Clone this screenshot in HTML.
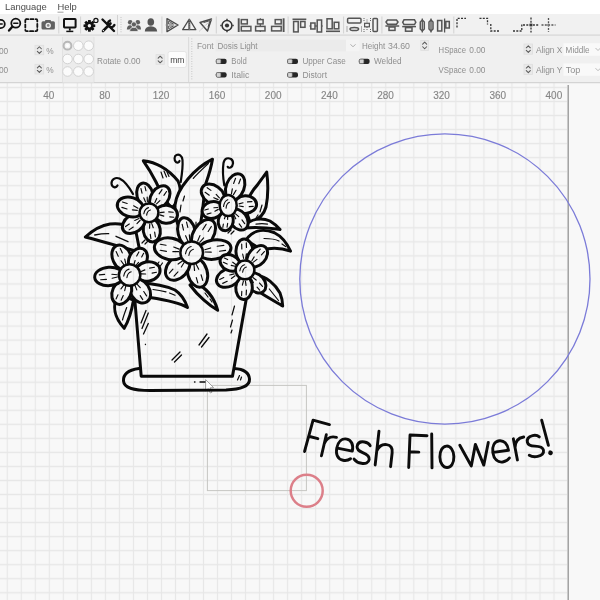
<!DOCTYPE html>
<html><head><meta charset="utf-8">
<style>
html,body{margin:0;padding:0;width:600px;height:600px;overflow:hidden;background:#f6f6f6}
svg{display:block;filter:blur(0.35px)}
text{font-family:"Liberation Sans",sans-serif}
</style></head><body>
<svg width="600" height="600" viewBox="0 0 600 600">
<defs>
<pattern id="grid" x="0.23" y="94.48" width="14.02" height="14.036" patternUnits="userSpaceOnUse">
<path d="M0 7.018H14.02M7.01 0V14.036" stroke="#e7e7e7" stroke-width="1.2" fill="none"/>
</pattern>
</defs>
<!-- canvas -->
<rect x="0" y="83" width="600" height="517" fill="#f8f8f8"/>
<rect x="0" y="83" width="567" height="517" fill="url(#grid)"/>
<line x1="568.2" y1="85" x2="568.2" y2="600" stroke="#9a9a9a" stroke-width="1.4"/>
<!-- CANVAS OBJ START -->
<circle cx="444.9" cy="279" r="145.1" fill="none" stroke="#7b7bd8" stroke-width="1.3"/>
<rect x="207.4" y="385.4" width="99" height="105.2" fill="none" stroke="#c6c6c2" stroke-width="1"/>
<g fill="none" stroke="#0c0c0c" stroke-width="2.9" stroke-linecap="round" stroke-linejoin="round">
<path transform="translate(304.56 451.48) rotate(15.18)" d="M0 0V-32.5H17M0 -15.8H9.5"/>
<path transform="translate(321.45 455.73) rotate(13.06)" d="M0 0V-21.5M0 -12.5C1.2 -18.5 5 -21.5 10.5 -21.3"/>
<path transform="translate(334.67 458.59) rotate(11.41)" d="M0.6 -10.8H15.8C16 -17.5 12.5 -21.5 8 -21.5C3 -21.5 0 -17 0 -10.75C0 -4 3.5 0 8.5 0C11.5 0 13.8 -1 15.6 -3"/>
<path transform="translate(353.58 462.01) rotate(9.08)" d="M13.8 -18.8C12.3 -20.8 10.5 -21.5 7.5 -21.5C3.5 -21.5 1 -19.5 1 -16C1 -12.5 4 -11.6 7.5 -10.7C12 -9.6 15 -8.2 15 -5C15 -1.6 12 0 8 0C4.5 0 2 -1 0 -3"/>
<path transform="translate(375.18 464.95) rotate(6.42)" d="M0 0V-34M0 -14C1.5 -19 5 -21.5 9 -21.5C13.5 -21.5 15.5 -18.5 15.5 -14V0"/>
<path transform="translate(408.70 467.52) rotate(2.34)" d="M0 0V-32.5H17M0 -15.8H9.5"/>
<path transform="translate(432.00 467.89) rotate(-0.50)" d="M0 0V-34"/>
<path transform="translate(440.15 467.75) rotate(-1.49)" d="M7 -21.5C11 -21.5 14 -17 14 -10.75C14 -4.5 11 0 7 0C3 0 0 -4.5 0 -10.75C0 -17 3 -21.5 7 -21.5Z"/>
<path transform="translate(461.33 466.72) rotate(-4.07)" d="M0 -21.5L10 0L15.6 -21.3L22.5 0L28.6 -22.2"/>
<path transform="translate(494.35 463.20) rotate(-8.11)" d="M0.6 -10.8H15.8C16 -17.5 12.5 -21.5 8 -21.5C3 -21.5 0 -17 0 -10.75C0 -4 3.5 0 8.5 0C11.5 0 13.8 -1 15.6 -3"/>
<path transform="translate(517.42 459.94) rotate(-10.94)" d="M0 0V-21.5M0 -12.5C1.2 -18.5 5 -21.5 10.5 -21.3"/>
<path transform="translate(529.89 458.18) rotate(-12.46)" d="M13.8 -18.8C12.3 -20.8 10.5 -21.5 7.5 -21.5C3.5 -21.5 1 -19.5 1 -16C1 -12.5 4 -11.6 7.5 -10.7C12 -9.6 15 -8.2 15 -5C15 -1.6 12 0 8 0C4.5 0 2 -1 0 -3"/>
<path transform="translate(550.62 453.51) rotate(-15.04)" d="M0 -34.5L0 -8.5M-0.3 -1.6L0.3 -1.4M0 -1.5a0.9 0.9 0 1 0 0.1 0"/>
</g>
<circle cx="306.7" cy="490.8" r="16" fill="none" stroke="#dc7f89" stroke-width="2.5"/>
<!-- cursor -->
<path d="M205.6 379.6L205.6 391L208.3 388.6L210.3 393L212 392.2L210 387.9L213.6 387.6Z" fill="#fff" stroke="#8a8a8a" stroke-width="0.8" stroke-linejoin="round"/>
<!-- CANVAS OBJ END -->
<!-- FLOWERS START -->
<mask id="fm" maskUnits="userSpaceOnUse" x="0" y="0" width="600" height="600">
<rect x="0" y="0" width="600" height="600" fill="#000"/>
<path d="M139 368.5C128 370 123 374 123.5 381C124 388 133 390.3 150 390.5L226 390C241 389.5 250 386 249.5 379C249 372 243 369 234 368.5" fill="#000" stroke="#fff" stroke-width="3.0" stroke-linejoin="round" stroke-linecap="round"/>
<path d="M134.5 296L141.2 376.2L232.5 376.2L247.5 292" fill="#000" stroke="#fff" stroke-width="3.0" stroke-linejoin="round" stroke-linecap="round"/>
<path d="M172 360L180 352M174.5 362L181.5 355" fill="none" stroke="#fff" stroke-width="1.3" stroke-linecap="round"/>
<path d="M199 345L207 334M201.5 347L209 337.5" fill="none" stroke="#fff" stroke-width="1.3" stroke-linecap="round"/>
<path d="M141 323L146 310.5M142 328.5L148.3 313M143.5 334L148.3 323.5" fill="none" stroke="#fff" stroke-width="1.3" stroke-linecap="round"/>
<path d="M232 315L234.5 306M230.5 327L232.5 320M231 333L232 330" fill="none" stroke="#fff" stroke-width="1.2" stroke-linecap="round"/>
<path d="M237.5 380L239.5 375.5M240.5 380L241.5 377" fill="none" stroke="#fff" stroke-width="1.2" stroke-linecap="round"/>
<path d="M194.5 382L195 382M200 382L205 382" fill="none" stroke="#fff" stroke-width="1.3" stroke-linecap="round"/>
<path d="M145.3 344.2L145.5 344.6" fill="none" stroke="#fff" stroke-width="1.2" stroke-linecap="round"/>
<path d="M143.3 160.8C155 162 168 169 178 181C182 190 180 200 172 208C163 200 160 190 156 182C152 174 147 166 143.3 160.8Z" fill="#000" stroke="#fff" stroke-width="3.0" stroke-linejoin="round" stroke-linecap="round"/>
<path d="M161 172L163 178M164 171L166.5 177M167 172L169 176.5" fill="none" stroke="#fff" stroke-width="1.2" stroke-linecap="round"/>
<path d="M212.5 159.2C211 168 208.5 176 206 183C203.5 192 204 215 196 246C182 238 174 222 175 205C177 188 195 168 212.5 159.2Z" fill="#000" stroke="#fff" stroke-width="3.0" stroke-linejoin="round" stroke-linecap="round"/>
<path d="M208.3 163.5C202 169.5 197 174 193.3 178.3" fill="none" stroke="#fff" stroke-width="1.3" stroke-linecap="round"/>
<path d="M181 205L180 212M184.5 196L183 201M199 235L198.5 240M196 222L196 227" fill="none" stroke="#fff" stroke-width="1.2" stroke-linecap="round"/>
<path d="M266.7 172C268 182 268.5 195 266 207C264 214 259 220 250 222C244 210 247 196 257.5 184.9C261 180 264 176 266.7 172Z" fill="#000" stroke="#fff" stroke-width="3.0" stroke-linejoin="round" stroke-linecap="round"/>
<path d="M262 205L260 212M258 215L256 218" fill="none" stroke="#fff" stroke-width="1.2" stroke-linecap="round"/>
<path d="M244 226C251 219 261 217 270 221C275 224 278 227 280 229.5C272 228.5 262 226.5 244 228Z" fill="#000" stroke="#fff" stroke-width="3.0" stroke-linejoin="round" stroke-linecap="round"/>
<path d="M256 224.2C260 223.5 264 223.5 267.5 224.2" fill="none" stroke="#fff" stroke-width="1.2" stroke-linecap="round"/>
<path d="M246 240C252 231 262 228 274 232.5C281 236 287 243 290.5 251.2C283 248.5 273 247 262 250Z" fill="#000" stroke="#fff" stroke-width="3.0" stroke-linejoin="round" stroke-linecap="round"/>
<path d="M264 238.5C270 238.5 276 239.5 279 241M282 244L286 246.7" fill="none" stroke="#fff" stroke-width="1.2" stroke-linecap="round"/>
<path d="M85.3 237C92 231 100 225.5 110 224C118 223 124 224 130 227L136 232L140 252C128 249 110 243.5 85.3 237Z" fill="#000" stroke="#fff" stroke-width="3.0" stroke-linejoin="round" stroke-linecap="round"/>
<path d="M94.7 235C100 234 105 233.6 108.7 233.7M116 236.3L128 241.7" fill="none" stroke="#fff" stroke-width="1.3" stroke-linecap="round"/>
<path d="M118 294C113 304 112 315 124.2 328.3C128 322 131 315 133.5 300Z" fill="#000" stroke="#fff" stroke-width="3.0" stroke-linejoin="round" stroke-linecap="round"/>
<path d="M126.7 307.5C125 312 123.5 316 122.5 320" fill="none" stroke="#fff" stroke-width="1.2" stroke-linecap="round"/>
<path d="M140 283C152 283.5 163 284.5 175 290C181 294 185 300 187.5 307.5C180 303 170 300.5 150 297.5L140 293Z" fill="#000" stroke="#fff" stroke-width="3.0" stroke-linejoin="round" stroke-linecap="round"/>
<path d="M153 289.5C158 290 162 290.8 166 291.8M169.5 293L175 295.3" fill="none" stroke="#fff" stroke-width="1.2" stroke-linecap="round"/>
<path d="M195 283C205 287 213 294 217.7 310.3C210 306 198 296 190 285Z" fill="#000" stroke="#fff" stroke-width="3.0" stroke-linejoin="round" stroke-linecap="round"/>
<path d="M205 293L208 297M210 299L212 302" fill="none" stroke="#fff" stroke-width="1.2" stroke-linecap="round"/>
<path d="M257 276C266 276 275 284 280 293C282 298 282.7 303 282.7 306C278 303 270 299 256 290Z" fill="#000" stroke="#fff" stroke-width="3.0" stroke-linejoin="round" stroke-linecap="round"/>
<path d="M269.3 289L278.5 300.5" fill="none" stroke="#fff" stroke-width="1.2" stroke-linecap="round"/>
<path d="M156 266L159 262M159.5 267L162.5 263" fill="none" stroke="#fff" stroke-width="1.2" stroke-linecap="round"/>
<path d="M228 233L231 230M231 234L234 231" fill="none" stroke="#fff" stroke-width="1.2" stroke-linecap="round"/>
<path d="M142 243L145 240M145 244L148 241" fill="none" stroke="#fff" stroke-width="1.2" stroke-linecap="round"/>
<path d="M133 194C129 187 124.5 181 119.5 178.6C115.5 176.8 111.3 179.5 111.5 183.5C111.8 187.5 116 188.5 117.5 185.5" fill="none" stroke="#fff" stroke-width="2.2" stroke-linecap="round"/>
<path d="M180.7 182C182 174 183 166 182.5 160C182 155.5 179 154 176.5 155C174 156 174 160.5 176 162C177.5 163 179 162.5 179.5 161" fill="none" stroke="#fff" stroke-width="2.2" stroke-linecap="round"/>
<path d="M224.3 185.3C223 178 222.5 170 223.5 163C224.5 158 228 157.5 231 159C234 161 233.5 166 230.5 167.5C229 168 228 167.5 227.7 166.8" fill="none" stroke="#fff" stroke-width="2.2" stroke-linecap="round"/>
<ellipse cx="144.91" cy="195.07" rx="12.20" ry="8.00" transform="rotate(-103.00 144.91 195.07)" fill="#000" stroke="#fff" stroke-width="3.0"/>
<path d="M142.02 193.23L140.92 188.47M145.97 190.78L144.98 186.51M145.51 201.94L143.74 197.84M147.38 201.51L147.17 197.05" fill="none" stroke="#fff" stroke-width="1.15" stroke-linecap="round"/>
<ellipse cx="159.78" cy="197.40" rx="12.80" ry="8.70" transform="rotate(-55.00 159.78 197.40)" fill="#000" stroke="#fff" stroke-width="3.0"/>
<path d="M159.11 193.81L162.05 189.61M163.89 195.32L166.54 191.54M154.82 202.67L156.75 198.40M156.53 203.87L159.88 200.59" fill="none" stroke="#fff" stroke-width="1.15" stroke-linecap="round"/>
<ellipse cx="166.23" cy="214.31" rx="11.30" ry="9.00" transform="rotate(5.00 166.23 214.31)" fill="#000" stroke="#fff" stroke-width="3.0"/>
<path d="M168.72 211.82L173.22 212.21M169.78 216.88L173.79 217.23M160.02 212.68L164.16 212.14M159.84 214.83L163.81 216.08" fill="none" stroke="#fff" stroke-width="1.15" stroke-linecap="round"/>
<ellipse cx="151.77" cy="230.28" rx="11.70" ry="8.50" transform="rotate(81.00 151.77 230.28)" fill="#000" stroke="#fff" stroke-width="3.0"/>
<path d="M154.65 232.19L155.39 236.82M150.27 234.41L150.92 238.54M151.75 223.65L153.25 227.68M149.74 223.97L149.56 228.26" fill="none" stroke="#fff" stroke-width="1.15" stroke-linecap="round"/>
<ellipse cx="133.80" cy="223.44" rx="12.55" ry="8.70" transform="rotate(145.00 133.80 223.44)" fill="#000" stroke="#fff" stroke-width="3.0"/>
<path d="M133.25 227.02L129.13 229.90M129.27 223.96L125.57 226.55M140.16 220.26L136.96 223.57M138.96 218.55L134.76 220.43" fill="none" stroke="#fff" stroke-width="1.15" stroke-linecap="round"/>
<ellipse cx="130.43" cy="207.02" rx="13.45" ry="9.60" transform="rotate(-162.70 130.43 207.02)" fill="#000" stroke="#fff" stroke-width="3.0"/>
<path d="M127.01 208.97L121.87 207.37M127.14 203.48L122.48 202.03M137.28 210.36L132.37 209.83M137.96 208.16L133.63 205.80" fill="none" stroke="#fff" stroke-width="1.15" stroke-linecap="round"/>
<ellipse cx="149.00" cy="212.80" rx="9.40" ry="9.40" fill="#000" stroke="#fff" stroke-width="2.5"/>
<path d="M143.83 213.74Q144.77 208.57 148.53 207.63M146.65 215.15Q147.12 210.92 150.41 209.98" fill="none" stroke="#fff" stroke-width="1.1" stroke-linecap="round"/>
<ellipse cx="212.91" cy="194.56" rx="12.80" ry="9.00" transform="rotate(-144.40 212.91 194.56)" fill="#000" stroke="#fff" stroke-width="3.0"/>
<path d="M209.26 195.26L205.10 192.28M210.92 190.36L207.17 187.67M218.11 199.61L213.84 197.66M219.37 197.85L216.15 194.44" fill="none" stroke="#fff" stroke-width="1.15" stroke-linecap="round"/>
<ellipse cx="235.17" cy="186.97" rx="13.80" ry="9.00" transform="rotate(-69.40 235.17 186.97)" fill="#000" stroke="#fff" stroke-width="3.0"/>
<path d="M233.61 183.43L235.55 178.27M238.77 183.77L240.54 179.07M231.44 193.82L232.34 188.85M233.46 194.58L236.05 190.25" fill="none" stroke="#fff" stroke-width="1.15" stroke-linecap="round"/>
<ellipse cx="245.38" cy="204.63" rx="11.20" ry="8.80" transform="rotate(-2.90 245.38 204.63)" fill="#000" stroke="#fff" stroke-width="3.0"/>
<path d="M247.48 201.88L251.96 201.65M249.22 206.64L253.20 206.44M239.06 203.89L243.04 202.81M239.17 206.00L243.24 206.68" fill="none" stroke="#fff" stroke-width="1.15" stroke-linecap="round"/>
<ellipse cx="238.58" cy="219.59" rx="11.50" ry="8.30" transform="rotate(53.60 238.58 219.59)" fill="#000" stroke="#fff" stroke-width="3.0"/>
<path d="M241.95 219.96L244.68 223.66M239.17 223.88L241.60 227.18M235.56 213.81L238.69 216.65M233.96 214.99L235.75 218.82" fill="none" stroke="#fff" stroke-width="1.15" stroke-linecap="round"/>
<ellipse cx="225.74" cy="221.01" rx="9.70" ry="7.50" transform="rotate(99.00 225.74 221.01)" fill="#000" stroke="#fff" stroke-width="3.0"/>
<path d="M227.66 223.27L227.06 227.11M223.35 224.11L222.83 227.45M227.48 215.78L227.68 219.35M225.70 215.50L224.42 218.83" fill="none" stroke="#fff" stroke-width="1.15" stroke-linecap="round"/>
<ellipse cx="212.39" cy="210.03" rx="10.45" ry="8.30" transform="rotate(164.00 212.39 210.03)" fill="#000" stroke="#fff" stroke-width="3.0"/>
<path d="M211.06 213.00L207.05 214.16M208.36 209.03L204.83 210.04M218.29 209.38L214.90 211.21M217.74 207.46L213.89 207.70" fill="none" stroke="#fff" stroke-width="1.15" stroke-linecap="round"/>
<ellipse cx="228.20" cy="205.50" rx="8.50" ry="10.60" fill="#000" stroke="#fff" stroke-width="2.5"/>
<path d="M223.52 206.56Q224.38 200.73 227.77 199.67M226.07 208.15Q226.50 203.38 229.47 202.32" fill="none" stroke="#fff" stroke-width="1.1" stroke-linecap="round"/>
<ellipse cx="121.83" cy="257.55" rx="13.10" ry="9.20" transform="rotate(-114.00 121.83 257.55)" fill="#000" stroke="#fff" stroke-width="3.0"/>
<path d="M118.24 256.28L116.11 251.49M122.26 252.85L120.33 248.52M123.81 264.70L121.05 260.77M125.82 263.80L124.75 259.12" fill="none" stroke="#fff" stroke-width="1.15" stroke-linecap="round"/>
<ellipse cx="137.91" cy="259.37" rx="11.70" ry="8.80" transform="rotate(-62.00 137.91 259.37)" fill="#000" stroke="#fff" stroke-width="3.0"/>
<path d="M136.68 256.07L138.87 251.93M141.65 257.01L143.62 253.32M133.90 264.66L135.10 260.53M135.77 265.65L138.52 262.35" fill="none" stroke="#fff" stroke-width="1.15" stroke-linecap="round"/>
<ellipse cx="147.71" cy="271.48" rx="12.45" ry="9.60" transform="rotate(-11.00 147.71 271.48)" fill="#000" stroke="#fff" stroke-width="3.0"/>
<path d="M149.61 268.18L154.49 267.23M152.09 273.07L156.48 272.22M140.65 271.68L144.86 269.88M141.09 273.94L145.67 274.03" fill="none" stroke="#fff" stroke-width="1.15" stroke-linecap="round"/>
<ellipse cx="139.95" cy="290.93" rx="13.00" ry="9.50" transform="rotate(57.00 139.95 290.93)" fill="#000" stroke="#fff" stroke-width="3.0"/>
<path d="M143.75 291.56L146.59 295.92M140.19 295.67L142.75 299.61M136.94 284.21L140.28 287.62M135.03 285.45L136.78 289.89" fill="none" stroke="#fff" stroke-width="1.15" stroke-linecap="round"/>
<ellipse cx="121.77" cy="292.09" rx="12.80" ry="9.30" transform="rotate(114.60 121.77 292.09)" fill="#000" stroke="#fff" stroke-width="3.0"/>
<path d="M123.25 295.58L121.11 300.24M117.97 294.82L116.05 299.02M125.77 286.04L124.70 290.62M123.74 285.11L120.98 288.91" fill="none" stroke="#fff" stroke-width="1.15" stroke-linecap="round"/>
<ellipse cx="109.15" cy="276.43" rx="14.50" ry="9.20" transform="rotate(176.00 109.15 276.43)" fill="#000" stroke="#fff" stroke-width="3.0"/>
<path d="M106.45 279.39L100.66 279.79M104.60 274.44L99.31 274.81M117.33 276.96L112.18 278.25M117.17 274.76L111.90 274.21" fill="none" stroke="#fff" stroke-width="1.15" stroke-linecap="round"/>
<ellipse cx="129.60" cy="275.00" rx="10.70" ry="10.70" fill="#000" stroke="#fff" stroke-width="2.5"/>
<path d="M123.71 276.07Q124.78 270.19 129.06 269.12M126.92 277.68Q127.46 272.86 131.20 271.79" fill="none" stroke="#fff" stroke-width="1.1" stroke-linecap="round"/>
<ellipse cx="186.77" cy="232.34" rx="14.95" ry="8.70" transform="rotate(-103.60 186.77 232.34)" fill="#000" stroke="#fff" stroke-width="3.0"/>
<path d="M183.53 230.04L182.13 224.23M187.83 227.46L186.54 222.14M187.73 240.72L185.62 235.69M189.76 240.23L189.34 234.79" fill="none" stroke="#fff" stroke-width="1.15" stroke-linecap="round"/>
<ellipse cx="203.51" cy="234.08" rx="16.05" ry="10.00" transform="rotate(-57.60 203.51 234.08)" fill="#000" stroke="#fff" stroke-width="3.0"/>
<path d="M202.70 229.76L206.14 224.34M208.15 231.45L211.32 226.45M197.69 241.03L199.94 235.61M199.71 242.31L203.65 237.97" fill="none" stroke="#fff" stroke-width="1.15" stroke-linecap="round"/>
<ellipse cx="214.28" cy="249.57" rx="16.80" ry="9.60" transform="rotate(-7.90 214.28 249.57)" fill="#000" stroke="#fff" stroke-width="3.0"/>
<path d="M217.22 246.25L223.87 245.33M219.43 251.28L225.59 250.42M204.81 249.72L210.67 247.94M205.12 252.00L211.25 252.12" fill="none" stroke="#fff" stroke-width="1.15" stroke-linecap="round"/>
<ellipse cx="197.43" cy="272.69" rx="14.80" ry="9.80" transform="rotate(74.00 197.43 272.69)" fill="#000" stroke="#fff" stroke-width="3.0"/>
<path d="M201.08 274.73L202.71 280.42M196.31 277.66L197.80 282.87M196.28 264.40L198.69 269.25M194.02 265.05L194.54 270.44" fill="none" stroke="#fff" stroke-width="1.15" stroke-linecap="round"/>
<ellipse cx="177.75" cy="267.66" rx="14.45" ry="10.00" transform="rotate(133.00 177.75 267.66)" fill="#000" stroke="#fff" stroke-width="3.0"/>
<path d="M177.98 271.82L174.03 276.04M172.93 269.16L169.33 273.02M184.15 262.56L181.33 267.04M182.39 260.92L178.12 264.04" fill="none" stroke="#fff" stroke-width="1.15" stroke-linecap="round"/>
<ellipse cx="170.15" cy="248.78" rx="15.90" ry="10.80" transform="rotate(-169.70 170.15 248.78)" fill="#000" stroke="#fff" stroke-width="3.0"/>
<path d="M166.44 251.40L160.19 250.27M166.03 245.29L160.27 244.24M178.68 251.65L172.86 251.69M179.15 249.10L173.71 247.02" fill="none" stroke="#fff" stroke-width="1.15" stroke-linecap="round"/>
<ellipse cx="191.70" cy="252.70" rx="11.30" ry="11.30" fill="#000" stroke="#fff" stroke-width="2.5"/>
<path d="M185.48 253.83Q186.61 247.61 191.13 246.48M188.88 255.52Q189.44 250.44 193.39 249.31" fill="none" stroke="#fff" stroke-width="1.1" stroke-linecap="round"/>
<ellipse cx="244.45" cy="251.46" rx="12.45" ry="8.50" transform="rotate(-91.70 244.45 251.46)" fill="#000" stroke="#fff" stroke-width="3.0"/>
<path d="M241.83 249.04L241.68 244.07M246.46 247.41L246.33 242.93M243.64 258.46L242.66 254.00M245.68 258.40L246.40 253.89" fill="none" stroke="#fff" stroke-width="1.15" stroke-linecap="round"/>
<ellipse cx="257.21" cy="256.34" rx="12.25" ry="8.50" transform="rotate(-48.00 257.21 256.34)" fill="#000" stroke="#fff" stroke-width="3.0"/>
<path d="M256.96 252.81L260.23 249.17M261.43 254.82L264.38 251.55M251.86 260.75L254.18 256.91M253.38 262.12L256.96 259.41" fill="none" stroke="#fff" stroke-width="1.15" stroke-linecap="round"/>
<ellipse cx="256.22" cy="282.94" rx="11.20" ry="8.30" transform="rotate(49.30 256.22 282.94)" fill="#000" stroke="#fff" stroke-width="3.0"/>
<path d="M259.56 283.01L262.49 286.41M257.08 287.13L259.68 290.15M252.88 277.54L256.14 280.05M251.37 278.83L253.37 282.43" fill="none" stroke="#fff" stroke-width="1.15" stroke-linecap="round"/>
<ellipse cx="244.07" cy="287.68" rx="11.80" ry="8.30" transform="rotate(93.00 244.07 287.68)" fill="#000" stroke="#fff" stroke-width="3.0"/>
<path d="M246.43 290.16L246.18 294.88M241.79 291.42L241.57 295.64M245.41 281.13L246.02 285.41M243.42 281.02L242.37 285.22" fill="none" stroke="#fff" stroke-width="1.15" stroke-linecap="round"/>
<ellipse cx="228.32" cy="277.78" rx="12.45" ry="8.80" transform="rotate(154.70 228.32 277.78)" fill="#000" stroke="#fff" stroke-width="3.0"/>
<path d="M227.20 281.24L222.69 283.36M223.77 277.50L219.72 279.42M235.07 275.76L231.40 278.47M234.17 273.85L229.74 274.97" fill="none" stroke="#fff" stroke-width="1.15" stroke-linecap="round"/>
<ellipse cx="230.07" cy="262.87" rx="10.50" ry="7.80" transform="rotate(-154.80 230.07 262.87)" fill="#000" stroke="#fff" stroke-width="3.0"/>
<path d="M227.17 264.10L223.37 262.31M227.64 259.58L224.30 258.00M234.99 266.23L231.24 265.32M235.79 264.53L232.70 262.22" fill="none" stroke="#fff" stroke-width="1.15" stroke-linecap="round"/>
<ellipse cx="245.00" cy="269.90" rx="9.40" ry="9.40" fill="#000" stroke="#fff" stroke-width="2.5"/>
<path d="M239.83 270.84Q240.77 265.67 244.53 264.73M242.65 272.25Q243.12 268.02 246.41 267.08" fill="none" stroke="#fff" stroke-width="1.1" stroke-linecap="round"/>
</mask>
<rect x="80" y="140" width="220" height="260" fill="#0a0a0a" mask="url(#fm)"/>
<!-- FLOWERS END -->
<!-- ruler labels -->
<g font-size="10" fill="#858585" stroke="#858585" stroke-width="0.12" text-anchor="middle">
<text x="48.7" y="99">40</text><text x="104.8" y="99">80</text><text x="161" y="99">120</text>
<text x="217.1" y="99">160</text><text x="273.2" y="99">200</text><text x="329.4" y="99">240</text>
<text x="385.5" y="99">280</text><text x="441.6" y="99">320</text><text x="497.8" y="99">360</text>
<text x="553.9" y="99">400</text>
</g>
<!-- menu -->
<rect x="0" y="0" width="600" height="14" fill="#ffffff"/>
<g font-size="9.4" fill="#4d4d4d">
<text x="5" y="10.3">Language</text><text x="57.5" y="10.3">Help</text>
</g>
<line x1="57.5" y1="12.2" x2="63.5" y2="12.2" stroke="#777" stroke-width="0.7"/>
<!-- toolbar -->
<rect x="0" y="14" width="600" height="21" fill="#f1f1f1"/>
<line x1="0" y1="35.2" x2="600" y2="35.2" stroke="#d6d6d6" stroke-width="1.2"/>
<!-- toolbar icons -->
<g fill="none" stroke="#111" stroke-linecap="round" stroke-linejoin="round">
 <!-- zoom in partial -->
 <circle cx="0.6" cy="24" r="4.2" stroke-width="1.8"/>
 <path d="M-1 24H2.2" stroke-width="1.5"/>
 <!-- zoom out -->
 <circle cx="15.8" cy="23.2" r="4.5" stroke-width="1.8"/>
 <path d="M13.8 23.2H17.8" stroke-width="1.6"/>
 <path d="M12.5 26.6L9 30.6" stroke-width="2.3"/>
 <!-- dashed select -->
 <rect x="25.3" y="19.2" width="12" height="12" rx="1.2" stroke-width="1.8" stroke-dasharray="3.2 2.2" stroke-dashoffset="1.5"/>
 <!-- monitor -->
 <rect x="64" y="19" width="11.6" height="8.4" rx="0.6" stroke-width="2" stroke-linejoin="miter"/>
 <path d="M69.8 28.2V30.6" stroke-width="1.8" stroke-linecap="butt"/><path d="M66.3 31.4H73.3" stroke-width="1.5" stroke-linecap="butt"/>
</g>
<!-- camera -->
<g fill="#616161">
 <rect x="41.5" y="21.3" width="13.4" height="8.3" rx="1.5"/>
 <rect x="45" y="20" width="6" height="2.5" rx="0.8"/>
</g>
<circle cx="48.2" cy="25.4" r="2.7" fill="#eee"/>
<circle cx="48.2" cy="25.4" r="1.3" fill="#888"/>
<!-- gear -->
<path d="M95.26 24.49L95.26 27.11L93.42 27.31L93.32 27.57L94.47 29.01L92.61 30.87L91.17 29.72L90.91 29.82L90.71 31.66L88.09 31.66L87.89 29.82L87.63 29.72L86.19 30.87L84.33 29.01L85.48 27.57L85.38 27.31L83.54 27.11L83.54 24.49L85.38 24.29L85.48 24.03L84.33 22.59L86.19 20.73L87.63 21.88L87.89 21.78L88.09 19.94L90.71 19.94L90.91 21.78L91.17 21.88L92.61 20.73L94.47 22.59L93.32 24.03L93.42 24.29Z" fill="#111"/>
<circle cx="89.4" cy="25.8" r="1.7" fill="#f1f1f1"/>
<circle cx="95.9" cy="20.4" r="2.1" fill="none" stroke="#111" stroke-width="1.2"/>
<!-- wrench + screwdriver -->
<g stroke="#111" stroke-linecap="round" fill="none">
 <path d="M102.5 19.5L114 31" stroke-width="2.4"/>
 <path d="M103 31L110.5 23.5" stroke-width="2.6"/>
 <path d="M110 20.6a3.4 3.4 0 1 0 4.4 4.4" stroke-width="2.4"/>
</g>
<circle cx="103.4" cy="30.6" r="0.7" fill="#fff"/>
<!-- separators -->
<g stroke="#d2d2d2" stroke-width="1">
 <path d="M58.8 16.5V33.5M80.6 16.5V33.5M117.5 15V35M161.9 16.5V33.5M216.3 16.5V33.5M288.1 16.5V33.5M343.6 16.5V33.5M381.9 16.5V33.5M453.8 16.5V33.5"/>
</g>
<path d="M121 17V33" stroke="#b8b8b8" stroke-width="1" stroke-dasharray="0.8 1.6"/>
<!-- group -->
<g fill="#5f5f5f">
 <circle cx="130.2" cy="22.2" r="2.3"/><circle cx="137.8" cy="22.2" r="2.3"/>
 <path d="M126.8 29.5Q127 25.2 130.2 25.2Q133.2 25.2 133.5 29.5Z"/>
 <path d="M134.5 29.5Q134.8 25.2 137.8 25.2Q141 25.2 141 29.5Z"/>
 <circle cx="133.9" cy="24.4" r="2.6" stroke="#f1f1f1" stroke-width="0.8"/>
 <path d="M129.6 31.6Q129.8 27.3 133.9 27.3Q138 27.3 138.2 31.6Z" stroke="#f1f1f1" stroke-width="0.8"/>
</g>
<!-- person -->
<g fill="#555">
 <ellipse cx="150.8" cy="22" rx="3.3" ry="3.8"/>
 <path d="M144.8 31.5Q144.9 26.5 150.8 26.2Q156.8 26.5 157.2 31.5Z"/>
</g>
<!-- mirror icons -->
<g fill="none" stroke="#4a4a4a" stroke-width="1.4" stroke-linejoin="round">
 <path d="M167 18.6L178 25L167 31.6Z"/>
 <path d="M168.6 21.2L173.5 24H168.6ZM168.6 26H173.5L168.6 28.8Z" stroke-width="0.9"/>
 <path d="M189 19.5L182.7 29.7H189ZM189.6 19.5L195.8 29.7H189.6Z" stroke-width="1.3"/>
 <path d="M200 22.5L211.5 19L207.5 31Z"/>
 <path d="M203.5 22.6L210.3 20.5M209.8 21L208 27.2" stroke-width="1"/>
</g>
<path d="M165.5 25H178.5M189.3 18.5V30.5M199.5 31L212 19" stroke="#999" stroke-width="0.8" stroke-dasharray="1 0.8"/>
<!-- target -->
<g stroke="#333" fill="none">
 <circle cx="227" cy="25.5" r="4.9" stroke-width="1.5"/>
 <path d="M227 18.8V20.2M227 30.8V32.2M220.3 25.5H221.7M232.3 25.5H233.7" stroke-width="1.4"/>
</g>
<circle cx="227" cy="25.5" r="2.1" fill="#333"/>
<!-- align icons -->
<g fill="none" stroke="#555" stroke-width="1.5" stroke-linejoin="miter">
 <path d="M238.7 18.3V32" stroke-width="1.9"/>
 <rect x="241.3" y="19.6" width="6" height="4.3"/><rect x="241.3" y="26.4" width="9.6" height="4.5"/>
 <path d="M260.3 18.3V32" stroke-width="1.2"/>
 <rect x="257.5" y="19.6" width="5.6" height="4.3" fill="#f1f1f1"/><rect x="255.6" y="26.4" width="9.4" height="4.5" fill="#f1f1f1"/>
 <path d="M283.6 18.3V32" stroke-width="1.9"/>
 <rect x="275.2" y="19.6" width="6" height="4.3"/><rect x="271.6" y="26.4" width="9.6" height="4.5"/>
 <path d="M292.5 19.3H306.3" stroke-width="1.6"/>
 <rect x="293.6" y="21.5" width="4.6" height="10.4"/><rect x="300.6" y="21.5" width="4.4" height="5.8"/>
 <path d="M309.5 26H322.7" stroke-width="1.2"/>
 <rect x="310.8" y="23" width="4.2" height="6" fill="#f1f1f1"/><rect x="317.2" y="20" width="4.4" height="12" fill="#f1f1f1"/>
 <path d="M326 31.3H340" stroke-width="1.6"/>
 <rect x="327" y="18.8" width="5.2" height="10"/><rect x="334.2" y="22.3" width="4.6" height="6.5"/>
 <rect x="347.6" y="18.3" width="13.4" height="4.6" rx="1"/>
 <ellipse cx="354.3" cy="29" rx="4.3" ry="1.6"/>
 <rect x="364.6" y="23.3" width="4.8" height="3.5" stroke-width="1.2"/>
 <rect x="373" y="18.4" width="4.4" height="13" rx="0.8"/>
</g>
<g stroke="#555" stroke-width="0.9" stroke-dasharray="1 1" fill="none">
 <path d="M347 26.5V31.5M361.5 26.5V31.5M364 18V21M370.5 18V21M364 29V32M370.5 29V32M367 19.5V23M367 27V31"/>
</g>
<g fill="none" stroke="#555" stroke-width="1.5">
 <path d="M387.5 20H396.5L398 22L396.5 24.2H387.5L386 22Z"/><path d="M385.4 26H399.2"/><rect x="389" y="27" width="6" height="3.4"/>
 <path d="M404 19.8H414.5L415.8 22.2L414.5 24.6H404L402.7 22.2Z"/><path d="M402.2 26.6H416"/><rect x="405.5" y="27.6" width="6.5" height="3.6"/>
 <path d="M422.3 18.5V32.5M431 18.5V32.5" stroke-width="1.3"/>
 <path d="M422.3 20L424.3 22V29L422.3 31L420.3 29V22Z"/><path d="M431 20L433 22V29L431 31L429 29V22Z"/>
 <rect x="437.6" y="20.5" width="4.2" height="10.5"/><path d="M444.6 18.5V32.5" stroke-width="1.3"/><rect x="445.8" y="21.5" width="3.5" height="6.5"/>
</g>
<!-- corner / center icons -->
<g fill="none" stroke="#333" stroke-width="1.3" stroke-dasharray="2 1.3">
 <path d="M457 27.5V18.3H466"/>
 <path d="M479.5 18.3H487.5V24.5"/>
 <path d="M490.8 24V31H499.5"/>
 <path d="M513 31H521.8V23.5"/>
 <path d="M523 25H539M531 17.5V32.5"/>
 <path d="M541.5 25H555.5M548.5 18V32" stroke="#555"/>
</g>
<rect x="529.6" y="23.6" width="2.8" height="2.8" fill="#333"/>
<circle cx="548.5" cy="25" r="1.3" fill="#777"/>

<!-- panel -->
<rect x="0" y="36" width="600" height="47" fill="#f0f0f0"/>
<line x1="0" y1="82.6" x2="600" y2="82.6" stroke="#d4d4d4" stroke-width="1.2"/>
<!-- panel content -->
<rect x="62.5" y="36.5" width="31.5" height="46" fill="#ececec"/>
<path d="M62.5 37V82M94 37V82" stroke="#e2e2e2" stroke-width="1"/>
<g font-size="8.3" fill="#8e8e8e">
 <text x="-1" y="53.5">00</text><text x="-1" y="72.5">00</text>
 <text x="46.3" y="53.8">%</text><text x="46.3" y="72.6">%</text>
 <text x="97" y="63.6" textLength="24" lengthAdjust="spacingAndGlyphs">Rotate</text><text x="124" y="63.6" textLength="16.6" lengthAdjust="spacingAndGlyphs">0.00</text>
 <text x="197" y="49" textLength="16.6" lengthAdjust="spacingAndGlyphs">Font</text>
 <text x="231.3" y="64.2" textLength="15.4" lengthAdjust="spacingAndGlyphs">Bold</text><text x="231.3" y="77.6" textLength="18" lengthAdjust="spacingAndGlyphs">Italic</text>
 <text x="302.5" y="64.2" textLength="43.2" lengthAdjust="spacingAndGlyphs">Upper Case</text><text x="302.5" y="77.6" textLength="24.5" lengthAdjust="spacingAndGlyphs">Distort</text>
 <text x="374" y="64.2" textLength="27.6" lengthAdjust="spacingAndGlyphs">Welded</text>
 <text x="362" y="48.8" textLength="23.2" lengthAdjust="spacingAndGlyphs">Height</text><text x="388" y="48.8" textLength="22" lengthAdjust="spacingAndGlyphs">34.60</text>
 <text x="438.6" y="52.5" textLength="27.4" lengthAdjust="spacingAndGlyphs">HSpace</text><text x="469.3" y="52.5" textLength="16.2" lengthAdjust="spacingAndGlyphs">0.00</text>
 <text x="438.6" y="72.5" textLength="27.4" lengthAdjust="spacingAndGlyphs">VSpace</text><text x="469.3" y="72.5" textLength="16.2" lengthAdjust="spacingAndGlyphs">0.00</text>
 <text x="535.9" y="52.8" textLength="26.4" lengthAdjust="spacingAndGlyphs">Align X</text><text x="535.9" y="72.8" textLength="26.4" lengthAdjust="spacingAndGlyphs">Align Y</text>
</g>
<!-- circles grid -->
<g fill="#fbfbfb" stroke="#d2d2d2" stroke-width="1">
 <circle cx="78.3" cy="45.7" r="4.8"/><circle cx="88.7" cy="45.7" r="4.8"/>
 <circle cx="67.5" cy="59" r="4.8"/><circle cx="78.3" cy="59" r="4.8"/><circle cx="88.7" cy="59" r="4.8"/>
 <circle cx="67.5" cy="71.5" r="4.8"/><circle cx="78.3" cy="71.5" r="4.8"/><circle cx="88.7" cy="71.5" r="4.8"/>
</g>
<circle cx="67.5" cy="45.7" r="3.9" fill="#f4f4f4" stroke="#b8b8b8" stroke-width="2"/>
<circle cx="67.5" cy="45.7" r="1.4" fill="#fff"/>
<!-- spinners -->
<g fill="#e9e9e9" stroke="#dedede" stroke-width="0.8">
 <rect x="35" y="45.3" width="8.7" height="9.5"/><rect x="35" y="64.3" width="8.7" height="9.7"/>
 <rect x="156" y="54.7" width="8.3" height="9.6"/>
 <rect x="420.8" y="40.4" width="7.7" height="10.1"/>
 <rect x="524" y="44" width="8.6" height="10.2"/><rect x="524" y="64.3" width="8.6" height="10.1"/>
</g>
<path d="M37.35 48.75L39.35 46.75L41.35 48.75M37.35 51.35L39.35 53.35L41.35 51.35M37.35 67.85L39.35 65.85L41.35 67.85M37.35 70.45L39.35 72.45L41.35 70.45M158.15 58.20L160.15 56.20L162.15 58.20M158.15 60.80L160.15 62.80L162.15 60.80M422.65 44.15L424.65 42.15L426.65 44.15M422.65 46.75L424.65 48.75L426.65 46.75M526.30 47.80L528.30 45.80L530.30 47.80M526.30 50.40L528.30 52.40L530.30 50.40M526.30 68.05L528.30 66.05L530.30 68.05M526.30 70.65L528.30 72.65L530.30 70.65" fill="none" stroke="#5a5a5a" stroke-width="1.05" stroke-linecap="round" stroke-linejoin="round"/>
<!-- mm button -->
<rect x="168" y="51.5" width="18.3" height="16" rx="2" fill="#fdfdfd" stroke="#e0e0e0" stroke-width="0.8"/>
<text x="170.2" y="62.8" font-size="8.6" fill="#444">mm</text>
<!-- separators -->
<path d="M188.7 37V82" stroke="#d8d8d8" stroke-width="1"/>
<path d="M191.8 38.5V80.5" stroke="#b5b5b5" stroke-width="0.9" stroke-dasharray="0.8 1.7"/>
<!-- font combo -->
<rect x="215.7" y="39.5" width="144" height="12" fill="#ebebeb"/>
<rect x="346" y="39.5" width="13.7" height="12" fill="#f4f4f4"/>
<text x="217.5" y="48.9" font-size="8.3" fill="#8e8e8e" textLength="40" lengthAdjust="spacingAndGlyphs">Dosis Light</text>
<path d="M350.5 44.3L353 46.8L355.5 44.3" fill="none" stroke="#999" stroke-width="0.8"/>
<!-- toggles -->
<g>
 <rect x="215.8" y="58.7" width="10.8" height="5.4" rx="2" fill="#262626"/>
 <rect x="216.4" y="59.2" width="4.4" height="4.4" rx="1" fill="#d4d4d4" stroke="#777" stroke-width="0.5"/>
 <rect x="215.8" y="72.2" width="10.8" height="5.4" rx="2" fill="#262626"/>
 <rect x="216.4" y="72.7" width="4.4" height="4.4" rx="1" fill="#d4d4d4" stroke="#777" stroke-width="0.5"/>
 <rect x="287.2" y="58.7" width="10.8" height="5.4" rx="2" fill="#262626"/>
 <rect x="287.8" y="59.2" width="4.4" height="4.4" rx="1" fill="#d4d4d4" stroke="#777" stroke-width="0.5"/>
 <rect x="287.2" y="72.2" width="10.8" height="5.4" rx="2" fill="#262626"/>
 <rect x="287.8" y="72.7" width="4.4" height="4.4" rx="1" fill="#d4d4d4" stroke="#777" stroke-width="0.5"/>
 <rect x="358.8" y="58.7" width="10.8" height="5.4" rx="2" fill="#262626"/>
 <rect x="359.4" y="59.2" width="4.4" height="4.4" rx="1" fill="#d4d4d4" stroke="#777" stroke-width="0.5"/>
</g>
<!-- align combos -->
<rect x="563.4" y="43.2" width="40" height="12.5" fill="#f9f9f9"/>
<rect x="563.4" y="63.4" width="40" height="12.4" fill="#f9f9f9"/>
<g font-size="8.3" fill="#8e8e8e"><text x="565.6" y="52.8" textLength="24" lengthAdjust="spacingAndGlyphs">Middle</text><text x="565.8" y="72.8" textLength="14.6" lengthAdjust="spacingAndGlyphs">Top</text></g>
<path d="M595.5 48L598 50.5L600.5 48M595.5 68.2L598 70.7L600.5 68.2" fill="none" stroke="#aaa" stroke-width="0.8"/>
</svg>
</body></html>
